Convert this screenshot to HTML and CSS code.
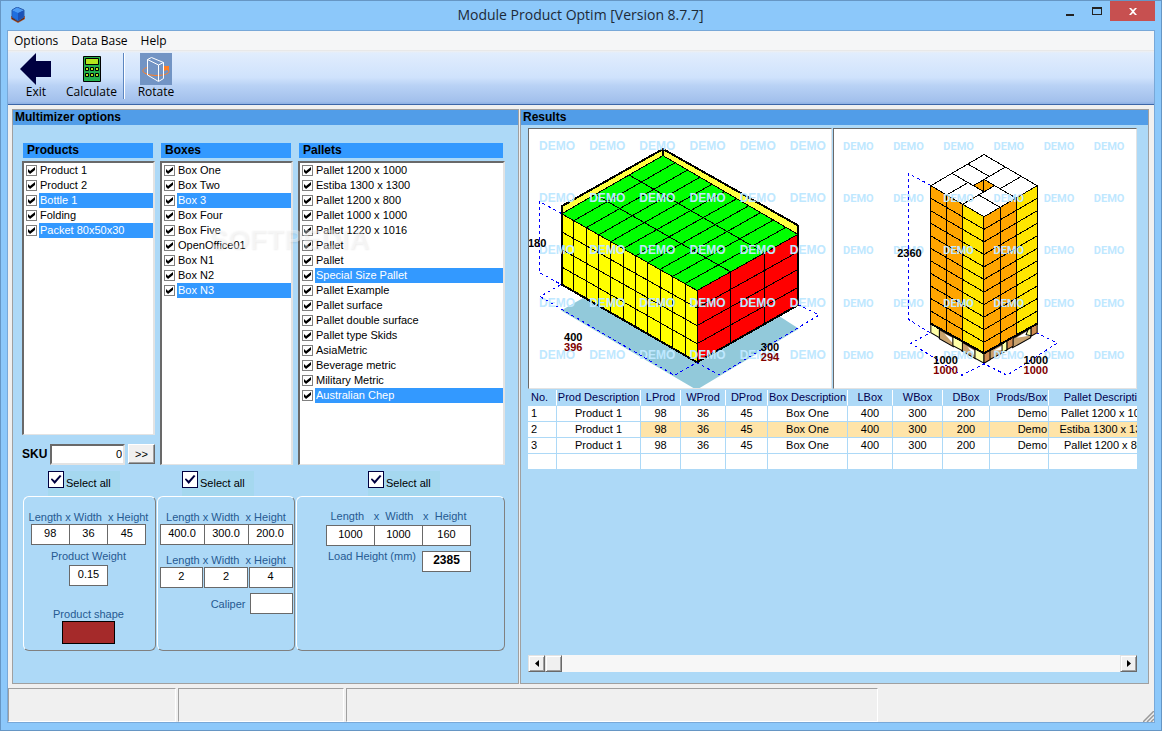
FILE: index.html
```html
<!DOCTYPE html>
<html lang="en">
<head>
<meta charset="utf-8">
<title>Module Product Optim [Version 8.7.7]</title>
<link rel="stylesheet" href="styles.css">
</head>
<body>
<div class="window">
  <header class="titlebar">
    <svg class="app-icon" viewBox="0 0 16 16" aria-hidden="true">
      <path d="M1 9v3l7 4 7-4V9z" fill="#b0552c"/>
      <path d="M2 10l6 4 6-4v2l-6 3-6-3z" fill="#5b2a18"/>
      <path d="M2 3l6 2v9l-6-4z" fill="#1f6fe0"/>
      <path d="M14 3L8 5v9l6-4z" fill="#1a52b8"/>
      <path d="M2 3l5-3 7 3-6 3z" fill="#4b9bf5"/>
      <path d="M2 3l5-3 7 3v7l-6 4-6-4z" fill="none" stroke="#2a5cae"/>
    </svg>
    <h1 class="title">Module Product Optim [Version 8.7.7]</h1>
    <div class="window-buttons">
      <button class="win-btn" aria-label="Minimize"><svg width="8" height="10"><path d="M0 8h8v2H0z" fill="#222"/></svg></button>
      <button class="win-btn" aria-label="Maximize"><svg width="10" height="8"><path d="M0 0h10v8H0zM1 2v5h8V2z" fill="#222" fill-rule="evenodd"/></svg></button>
      <button class="win-btn close" aria-label="Close"><svg width="8" height="7"><path d="M0 0h2l2 2 2-2h2L5 3.500l3 3.500H6L4 5 2 7H0l3-3.500z" fill="#fff"/></svg></button>
    </div>
  </header>

  <div class="client">
    <nav class="menubar">
      <button class="menu">Options</button>
      <button class="menu">Data Base</button>
      <button class="menu">Help</button>
    </nav>

    <div class="toolbar">
      <button class="tool tool-exit">
        <svg width="32" height="32" viewBox="0 0 32 32"><path d="M0 16L16 0v8h15v16H16v8z" fill="#000040"/></svg>
        Exit
      </button>
      <button class="tool tool-calc">
        <svg width="32" height="32" viewBox="0 0 32 32">
          <path d="M7.500 3.500h17v25h-17z" fill="#22b14c" stroke="#000"/>
          <path d="M9.500 5.500h13v6h-13z" fill="#b5e61d" stroke="#000"/>
          <path d="M9.500 14.500h3v3h-3zM14.500 14.500h3v3h-3zM19.500 14.500h3v3h-3zM9.500 20.500h3v3h-3zM14.500 20.500h3v3h-3zM19.500 20.500h3v3h-3z" fill="#b5e61d" stroke="#000"/>
        </svg>
        Calculate
      </button>
      <span class="tool-separator"></span>
      <button class="tool tool-rotate">
        <svg width="32" height="32" viewBox="0 0 32 32">
          <path d="M0 0h32v32H0z" fill="#7294c4"/>
          <path d="M8 14.500C4 15 2.500 17 3 18.500c2 4.500 20 5.500 25 1.500 2-2 1-4-4-5" fill="none" stroke="#ff7f27"/>
          <path d="M24 13h5v5l-2-1-3 1z" fill="#ff7f27"/>
          <path d="M7.500 6.500l4-2 12 5v16l-5 3-11-6.500zM7.500 6.500L18.500 12v16M18.500 12l5-2.500" fill="none" stroke="#fff"/>
        </svg>
        Rotate
      </button>
    </div>

    <main class="workspace">
      <section class="panel options">
        <h2 class="panel-title">Multimizer options</h2>
        <div class="columns">
          <div class="column">
            <h3 class="list-title">Products</h3>
            <div class="list">
              <label class="item"><input type="checkbox" checked><span>Product 1</span></label>
              <label class="item"><input type="checkbox" checked><span>Product 2</span></label>
              <label class="item selected"><input type="checkbox" checked><span>Bottle 1</span></label>
              <label class="item"><input type="checkbox" checked><span>Folding</span></label>
              <label class="item selected"><input type="checkbox" checked><span>Packet 80x50x30</span></label>
            </div>
            <div class="sku">
              <label for="sku">SKU</label>
              <input id="sku" type="text" value="0">
              <button>&gt;&gt;</button>
            </div>
          </div>
          <div class="column">
            <h3 class="list-title">Boxes</h3>
            <div class="list">
              <label class="item"><input type="checkbox" checked><span>Box One</span></label>
              <label class="item"><input type="checkbox" checked><span>Box Two</span></label>
              <label class="item selected"><input type="checkbox" checked><span>Box 3</span></label>
              <label class="item"><input type="checkbox" checked><span>Box Four</span></label>
              <label class="item"><input type="checkbox" checked><span>Box Five</span></label>
              <label class="item"><input type="checkbox" checked><span>OpenOffice01</span></label>
              <label class="item"><input type="checkbox" checked><span>Box N1</span></label>
              <label class="item"><input type="checkbox" checked><span>Box N2</span></label>
              <label class="item selected"><input type="checkbox" checked><span>Box N3</span></label>
            </div>
          </div>
          <div class="column">
            <h3 class="list-title">Pallets</h3>
            <div class="list">
              <label class="item"><input type="checkbox" checked><span>Pallet 1200 x 1000</span></label>
              <label class="item"><input type="checkbox" checked><span>Estiba 1300 x 1300</span></label>
              <label class="item"><input type="checkbox" checked><span>Pallet 1200 x 800</span></label>
              <label class="item"><input type="checkbox" checked><span>Pallet 1000 x 1000</span></label>
              <label class="item"><input type="checkbox" checked><span>Pallet 1220 x 1016</span></label>
              <label class="item"><input type="checkbox" checked><span>Pallet</span></label>
              <label class="item"><input type="checkbox" checked><span>Pallet</span></label>
              <label class="item selected"><input type="checkbox" checked><span>Special Size Pallet</span></label>
              <label class="item"><input type="checkbox" checked><span>Pallet Example</span></label>
              <label class="item"><input type="checkbox" checked><span>Pallet surface</span></label>
              <label class="item"><input type="checkbox" checked><span>Pallet double surface</span></label>
              <label class="item"><input type="checkbox" checked><span>Pallet type Skids</span></label>
              <label class="item"><input type="checkbox" checked><span>AsiaMetric</span></label>
              <label class="item"><input type="checkbox" checked><span>Beverage metric</span></label>
              <label class="item"><input type="checkbox" checked><span>Military Metric</span></label>
              <label class="item selected"><input type="checkbox" checked><span>Australian Chep</span></label>
            </div>
          </div>
        </div>

        <div class="groups">
          <div class="group-column product">
            <label class="select-all"><input type="checkbox" checked>Select all</label>
            <div class="group">
              <span class="caption">Length x Width&nbsp; x Height</span>
              <div class="fields">
                <input type="text" aria-label="Product length" value="98">
                <input type="text" aria-label="Product width" value="36">
                <input type="text" aria-label="Product height" value="45">
              </div>
              <label class="caption stacked" for="weight">Product Weight</label>
              <input class="weight" id="weight" type="text" value="0.15">
              <span class="caption shape-caption">Product shape</span>
              <button class="shape" aria-label="Product shape"></button>
            </div>
          </div>
          <div class="group-column box">
            <label class="select-all"><input type="checkbox" checked>Select all</label>
            <div class="group">
              <span class="caption">Length x Width&nbsp; x Height</span>
              <div class="fields">
                <input type="text" aria-label="Box length" value="400.0">
                <input type="text" aria-label="Box width" value="300.0">
                <input type="text" aria-label="Box height" value="200.0">
              </div>
              <span class="caption second-caption">Length x Width&nbsp; x Height</span>
              <div class="fields spaced">
                <input type="text" aria-label="Count along length" value="2">
                <input type="text" aria-label="Count along width" value="2">
                <input type="text" aria-label="Count along height" value="4">
              </div>
              <div class="inline-field">
                <label class="caption" for="caliper">Caliper</label>
                <input id="caliper" type="text" value="">
              </div>
            </div>
          </div>
          <div class="group-column pallet">
            <label class="select-all"><input type="checkbox" checked>Select all</label>
            <div class="group">
              <div class="caption spread"><span>Length</span><span>x&nbsp; Width</span><span>x&nbsp; Height</span></div>
              <div class="fields">
                <input type="text" aria-label="Pallet length" value="1000">
                <input type="text" aria-label="Pallet width" value="1000">
                <input type="text" aria-label="Pallet height" value="160">
              </div>
              <div class="inline-field">
                <label class="caption" for="load">Load Height (mm)</label>
                <input class="strong" id="load" type="text" value="2385">
              </div>
            </div>
          </div>
        </div>
        <div class="watermark">SOFTPEDIA</div>
      </section>

      <section class="panel results">
        <h2 class="panel-title">Results</h2>
        <div class="results-body">
          <div class="views">
            <svg class="view" viewBox="530 129 301 258" role="img" aria-label="Box loading">
              <path d="M562 310L597 290H740L799 328 697 389z" fill="#92c9da"/>
              <path d="M562.500 206L663.500 149 798 225V235L663.500 156 562.500 214z" fill="#ffff40"/>
              <path d="M562.500 213.500L663.500 155.500 798 234 697.500 290z" fill="#0f0"/>
              <path d="M562.500 213.500L697.500 290V361.500L562.500 284z" fill="#ff0"/>
              <path d="M697.500 290L798 234V304.500L697.500 361.500z" fill="#f00"/>
              <g class="grid">
                <path d="M562.500 213.500L663.500 155.500 798 234 697.500 290zM596 194.300l134.800 77M630 175l134.500 77.500"/>
                <path d="M574.500 220.500l101.300-58M587 227.400l101-57.500M599.500 234.500l101-57.500M611.500 241.300l101.300-57.500M624 248.200l101-57M636.500 255.200l101-57M648.500 262.200l101-57M660.500 269l101-57M673 276l101-56.500M685.500 283l100.500-56"/>
                <path d="M574.500 220.500v71M587.500 227.500v71M599.500 234.500v71M611.500 241.500v71M624.500 248.500v71M636.500 255.500v71M648.500 262.500v71M661.500 269v71M673.500 276v71M685.500 283v71M697.500 290v71"/>
                <path d="M562.500 231.500L697.500 307.500 798 251.500M562.500 249L697.500 325 798 269M562.500 266.500L697.500 343 798 287M730.500 271.500v71M764.500 253v71"/>
              </g>
              <path class="shell" d="M562.500 284V206L663.500 149 798 225V304.500L697.500 361.500 562.500 284M663.500 149v7"/>
              <g class="demo">
                <g id="demo-row"><text x="540" y="150">DEMO</text><text x="590" y="150">DEMO</text><text x="640" y="150">DEMO</text><text x="690" y="150">DEMO</text><text x="740" y="150">DEMO</text><text x="790" y="150">DEMO</text></g>
                <use href="#demo-row" y="52"/><use href="#demo-row" y="104"/><use href="#demo-row" y="156"/><use href="#demo-row" y="208"/>
              </g>
              <path class="dim" d="M562 213L540.500 201.500V272L562 284 541 296 675 374.500 697 362 720 374 819 314.500 798 304"/>
              <g class="num"><text x="529" y="247">180</text><text x="565" y="340">400</text><text class="net" x="565" y="350">396</text><text x="761" y="350">300</text><text class="net" x="761" y="360">294</text></g>
            </svg>
            <svg class="view" viewBox="835 129 301 258" role="img" aria-label="Pallet loading">
              <path d="M931.500 323v9l53 30.500 53-30.500v-9l-53 29.500z" fill="#fff"/>
              <path d="M940 329l14 8v9l-14-8zM962 341l14 8v9l-14-8zM1007 341l-17 9v9l17-9zM1031 328l-18 10v9l18-10z" fill="#c8a26e" stroke="#000"/>
              <path d="M1017 337l13-8v6zM994 350l12-7v6zM945 333l8 4v5zM968 346l7 4v5z" fill="#fff"/>
              <g class="block">
                <path d="M931.500 323v9l8.500 5v-9zM953.500 336v9l9.500 5v-9zM975.500 348v9.500l9 5V353zM1007.500 340v9l-5 3v-9zM1031.500 327v8l-5-1 2-5z" fill="#ffffa8"/>
                <path d="M984.500 353v9.500l6-3.500v-9.500zM1007.500 340v9l6-3.500v-9zM1031.500 326.500v9l6-3.500v-9z" fill="#d08c50"/>
              </g>
              <path d="M931.500 185.500L984.500 154.500 1037.500 185.500 984.500 216.500z" fill="#fff"/>
              <path d="M931.500 185.500L963.500 204V341L931.500 323zM984.500 216.500L1016.500 198V335L984.500 353zM974 185.500l10.500-6 10.500 6-10.500 6z" fill="#ffa500"/>
              <path d="M963.500 204L984.500 216.500V353L963.500 341zM1016.500 198L1037.500 185.500V323L1016.500 335z" fill="#ffe600"/>
              <g class="grid">
                <path d="M931.500 185.500L984.500 154.500 1037.500 185.500 984.500 216.500zM952.700 173.200L984.500 191.600M947.400 194.700L968.600 182.400M963.300 204L995.100 185.500M979.200 194.700L1000.400 207M984.500 179.300L1016.300 197.800M1000.400 188.600L1021.600 176.300M973.900 185.500L1005.700 167M968.600 164L989.800 176.300M984.500 179v12"/>
                <path d="M931.500 185.500V323M947.500 195v137M963.500 204v137M984.500 216.500V353M1000.500 207v137M1016.500 198v137M1037.500 185.500V323"/>
                <path id="layer" d="M931.500 198L984.500 229 1037.500 198"/>
                <use href="#layer" y="12.500"/><use href="#layer" y="25"/><use href="#layer" y="37.500"/><use href="#layer" y="50"/><use href="#layer" y="62.500"/><use href="#layer" y="75"/><use href="#layer" y="87.500"/><use href="#layer" y="100"/><use href="#layer" y="112.500"/>
              </g>
              <path class="shell" d="M931.500 323L984.500 352.500 1037.500 323"/>
              <g class="demo small">
                <g id="demo-row-2"><text x="844" y="150">DEMO</text><text x="894" y="150">DEMO</text><text x="944" y="150">DEMO</text><text x="994" y="150">DEMO</text><text x="1044" y="150">DEMO</text><text x="1094" y="150">DEMO</text></g>
                <use href="#demo-row-2" y="52"/><use href="#demo-row-2" y="104"/><use href="#demo-row-2" y="156"/><use href="#demo-row-2" y="208"/>
              </g>
              <path class="dim" d="M931 185L909.500 173.500V319L931 332 911.500 342.500 962.500 374.500 984.500 363 1007.500 374.500 1057.500 342.500 1037 332"/>
              <g class="num"><text x="898" y="257">2360</text><text x="934" y="363">1000</text><text class="net" x="934" y="373">1000</text><text x="1024" y="363">1000</text><text class="net" x="1024" y="373">1000</text></g>
            </svg>
          </div>

          <div class="table-wrap">
            <table>
              <colgroup><col class="w-no"><col class="w-prod"><col class="w-l"><col class="w-w"><col class="w-d"><col class="w-box"><col class="w-w"><col class="w-wb"><col class="w-db"><col class="w-pb"><col class="w-pal"></colgroup>
              <thead>
                <tr><th class="left">No.</th><th>Prod Description</th><th>LProd</th><th>WProd</th><th>DProd</th><th>Box Description</th><th>LBox</th><th>WBox</th><th>DBox</th><th class="right">Prods/Box</th><th>Pallet Description</th></tr>
              </thead>
              <tbody>
                <tr><td class="left">1</td><td>Product 1</td><td>98</td><td>36</td><td>45</td><td>Box One</td><td>400</td><td>300</td><td>200</td><td class="right">Demo</td><td>Pallet 1200 x 1000</td></tr>
                <tr class="current"><td class="left">2</td><td>Product 1</td><td>98</td><td>36</td><td>45</td><td>Box One</td><td>400</td><td>300</td><td>200</td><td class="right">Demo</td><td>Estiba 1300 x 1300</td></tr>
                <tr><td class="left">3</td><td>Product 1</td><td>98</td><td>36</td><td>45</td><td>Box One</td><td>400</td><td>300</td><td>200</td><td class="right">Demo</td><td>Pallet 1200 x 800</td></tr>
                <tr><td></td><td></td><td></td><td></td><td></td><td></td><td></td><td></td><td></td><td></td><td></td></tr>
              </tbody>
            </table>
          </div>

          <div class="scrollbar">
            <button aria-label="Scroll left"><svg width="4" height="7"><path d="M4 0v7L0 3.500z"/></svg></button>
            <span class="thumb"></span>
            <span class="track"></span>
            <button aria-label="Scroll right"><svg width="4" height="7"><path d="M0 0v7l4-3.500z"/></svg></button>
          </div>
        </div>
      </section>
    </main>

    <footer class="statusbar">
      <span class="status-cell first"></span>
      <span class="status-cell second"></span>
      <span class="status-cell third"></span>
      <svg class="grip" width="11" height="11"><path d="M0 11L11 0M4 11l7-7M8 11l3-3" stroke="#999" stroke-width="1.500"/></svg>
    </footer>
  </div>
</div>
</body>
</html>
```
FILE: styles.css
```css
* { box-sizing: border-box; }

body {
  margin: 0;
  font: 11px/15px "Liberation Sans", Arial, sans-serif;
  color: #000;
}

h1, h2, h3 { margin: 0; }

button, input { font: inherit; color: inherit; margin: 0; }

.window {
  display: flex;
  flex-direction: column;
  min-height: 100vh;
  padding: 0 7px 7px;
  background: #8cc8fa;
  border: 1px solid #6696c4;
}

/* Title bar */
.titlebar {
  display: grid;
  grid-template-columns: 1fr auto 1fr;
  height: 29px;
  margin-right: -1px;
}
.app-icon { width: 16px; height: 16px; margin: 6px 0 0 2px; }
.title {
  padding-right: 2px;
  font: 14px/28px "Open Sans", "Segoe UI", sans-serif;
  color: #1c2a38;
}
.window-buttons { display: flex; justify-content: flex-end; align-items: flex-start; }
.win-btn {
  display: grid;
  place-items: center;
  width: 27px;
  height: 20px;
  padding: 0;
  border: 0;
  background: none;
}
.win-btn.close { width: 45px; background: #c75050; }

.client {
  flex: 1;
  display: flex;
  flex-direction: column;
  margin: 0 -1px;
  border: 1px solid #78a8d8;
  background: #f0f0f0;
}

/* Menu and toolbar */
.menubar {
  display: flex;
  gap: 13px;
  height: 20px;
  padding-left: 6px;
  background: #f5f6f7;
  border-bottom: 1px solid #e8e8e8;
}
.menu {
  padding: 0;
  border: 0;
  background: none;
  font: 12px/20px "Open Sans", "Segoe UI", sans-serif;
}
.toolbar {
  display: flex;
  height: 54px;
  padding: 2px 4px 0;
  background: linear-gradient(#f0f0f0 0, #e1edfd 2px, #cfe2fc 50%, #b9d2f5 65%, #a2c0ec 95%, #8db0e4);
  border-bottom: 1px solid #3c66a8;
}
.tool {
  display: flex;
  flex-direction: column;
  align-items: center;
  padding: 0;
  border: 0;
  background: none;
  font: 12px/14px "Open Sans", "Segoe UI", sans-serif;
}
.tool-exit { width: 48px; }
.tool-calc { width: 63px; }
.tool-rotate { width: 62px; }
.tool-separator {
  width: 2px;
  height: 46px;
  background: #fff;
  border-left: 1px solid #5c86c0;
}

/* Panels */
.workspace {
  flex: 1;
  display: flex;
  gap: 1px;
  padding: 4px 5px 4px 4px;
}
.panel {
  position: relative;
  background: #add9f7;
  border: 1px solid #a0a0a0;
}
.panel-title {
  height: 15px;
  padding-left: 2px;
  background: #519de8;
  font-size: 12px;
  line-height: 14px;
}
.options { flex: none; width: 507px; }
.results { flex: 1; min-width: 0; display: flex; flex-direction: column; }

.columns {
  display: grid;
  grid-template-columns: 133px 133px 207px;
  column-gap: 5px;
  height: 322px;
  margin: 18px 0 0 9px;
}
.column { display: flex; flex-direction: column; }
.list-title {
  height: 15px;
  margin: 0 2px 3px 1px;
  padding-left: 4px;
  background: #39f;
  font-size: 12px;
  line-height: 14px;
}
.list {
  flex: 1;
  padding: 0;
  background: #fff;
  border: 2px solid #696969;
  border-width: 2px 2px 1px 2px;
  border-right-color: #e3e3e3;
  border-bottom-color: #e3e3e3;
}
.item { display: flex; align-items: center; height: 15px; }
.item span { flex: 1; height: 15px; padding-left: 1px; margin-left: 2px; }
.item.selected span { background: #39f; color: #fff; }
.item input {
  appearance: none;
  display: grid;
  place-items: center;
  width: 11px;
  height: 11px;
  margin-left: 2px;
  border: 1px solid #808080;
  background: #fff;
}
.item input:checked::before,
.select-all input:checked::before {
  content: "";
  width: 7px;
  height: 7px;
  background: #000;
  clip-path: polygon(0 29%, 29% 57%, 100% 0, 100% 43%, 29% 100%, 0 71%);
}

.sku { display: flex; align-items: center; height: 30px; padding-top: 8px; }
.sku label { width: 28px; font-weight: bold; font-size: 12px; }
.sku input {
  width: 75px;
  height: 21px;
  padding: 0 1px;
  text-align: right;
  background: #fff;
  border: 2px solid #696969;
  border-right-color: #e3e3e3;
  border-bottom-color: #e3e3e3;
}
.sku button {
  width: 27px;
  height: 20px;
  margin-left: 3px;
  padding: 0;
  background: #f0f0f0;
  border: 1px solid #fff;
  border-right-color: #696969;
  border-bottom-color: #696969;
  box-shadow: inset -1px -1px #a0a0a0;
}

/* Parameter groups */
.groups {
  display: grid;
  grid-template-columns: 133px 138px 209px;
  column-gap: 1px;
  margin: 6px 0 0 10px;
}
.select-all {
  display: flex;
  align-items: center;
  gap: 2px;
  width: 72px;
  height: 25px;
  margin-left: 25px;
  background: #a5d8ef;
}
.pallet .select-all { margin-left: 72px; }
.select-all input {
  appearance: none;
  display: grid;
  place-items: center;
  align-self: flex-start;
  width: 16px;
  height: 17px;
  border: 1px solid #000040;
  background: #fff;
}
.select-all input:checked::before {
  width: 11px;
  height: 9px;
  background: #000040;
  clip-path: polygon(0 45%, 15% 38%, 38% 65%, 85% 0, 100% 10%, 38% 100%);
}
.group {
  display: flex;
  flex-direction: column;
  align-items: center;
  height: 155px;
  padding-top: 13px;
  border: 1px solid #fff;
  border-right-color: #808080;
  border-bottom-color: #808080;
  border-radius: 6px;
}
.caption { color: #265a92; line-height: 14px; white-space: nowrap; }
.group input {
  height: 21px;
  padding: 0 0 4px;
  text-align: center;
  background: #fff;
  border: 1px solid #696969;
}
.fields { display: flex; }
.product .fields { width: 116px; }
.box .fields { width: 133px; }
.pallet .fields { width: 145px; }
.fields input { flex: 1; min-width: 0; }
.fields input + input { margin-left: -1px; }
.fields.spaced { gap: 1px; }
.fields.spaced input + input { margin-left: 0; }
.product .group { padding-right: 2px; }
.product .stacked { margin-top: 4px; }
.weight { width: 39px; margin-top: 2px; }
.shape-caption { margin-top: 21px; }
.shape {
  width: 53px;
  height: 23px;
  background: #a52a2a;
  border: 1px solid #000;
}
.second-caption { margin-top: 8px; }
.inline-field { display: flex; justify-content: flex-end; gap: 4px; }
.box .inline-field { width: 133px; margin-top: 5px; }
.box .inline-field label { padding-top: 4px; }
.box .inline-field input { width: 43px; }
.pallet .group { padding: 12px 4px 0 0; }
.pallet .fields { margin-top: 2px; }
.pallet .inline-field { width: 145px; margin-top: 5px; gap: 6px; }
.pallet .inline-field label { line-height: 11px; }
.pallet .inline-field input { width: 49px; }
.group .strong { font-weight: bold; font-size: 12px; }
.spread { display: flex; justify-content: space-between; width: 136px; }

.watermark {
  position: absolute;
  left: 196px;
  top: 113px;
  font-size: 28px;
  line-height: 34px;
  font-weight: bold;
  color: rgba(255, 255, 255, .4);
  text-shadow: 1px 1px 2px rgba(0, 0, 0, .07);
  pointer-events: none;
}

/* Results */
.results-body {
  flex: 1;
  display: flex;
  flex-direction: column;
  padding: 3px 11px 11px 7px;
}
.views { display: grid; grid-template-columns: 1fr 1fr; gap: 1px; }
.view {
  display: block;
  width: 100%;
  background: #fff;
  border: 2px solid #696969;
  border-width: 1px;
  border-right-color: #e3e3e3;
  border-bottom-color: #e3e3e3;
}
.grid { fill: none; stroke: #000; shape-rendering: crispEdges; }
.block { stroke: #000; }
.shell { fill: none; stroke: #000; stroke-width: 2px; shape-rendering: crispEdges; }
.dim { fill: none; stroke: #00f; stroke-dasharray: 3 3; shape-rendering: crispEdges; }
.demo { fill: #bfe8ff; font-size: 12px; font-weight: bold; }
.demo.small { font-family: Roboto, sans-serif; font-size: 11px; }
.num { font-size: 11px; font-weight: bold; }
.net { fill: #800000; }

.table-wrap { margin-top: 1px; overflow: hidden; }
table { width: 637px; table-layout: fixed; border-collapse: separate; border-spacing: 0; }
th, td {
  height: 16px;
  padding: 0 2px;
  text-align: center;
  font-weight: normal;
  line-height: 15px;
  white-space: nowrap;
  border-right: 1px solid #add9f7;
  border-bottom: 1px solid #add9f7;
}
th { padding: 0; color: #000050; border-right-color: #fff; }
td { background: #fff; }
.left { text-align: left; padding-left: 3px; }
.right { text-align: right; padding-right: 1px; }
.current td:nth-child(n+3) { background: #ffe4a8; }
.w-no { width: 29px; }
.w-prod { width: 84px; }
.w-l { width: 40px; }
.w-w { width: 45px; }
.w-d { width: 42px; }
.w-box { width: 80px; }
.w-wb { width: 50px; }
.w-db { width: 47px; }
.w-pb { width: 59px; }
.w-pal { width: 116px; }

.scrollbar { display: flex; height: 17px; margin-top: auto; }
.scrollbar button, .thumb {
  display: grid;
  place-items: center;
  width: 17px;
  padding: 0;
  background: #f0f0f0;
  border: 1px solid #e3e3e3;
  border-right-color: #696969;
  border-bottom-color: #696969;
  box-shadow: inset 1px 1px #fff, inset -1px -1px #a0a0a0;
}
.track { flex: 1; background: #f7f7f7; }

/* Status bar */
.statusbar { display: flex; gap: 2px; height: 34px; }
.status-cell {
  border: 1px solid #a0a0a0;
  border-right-color: #fff;
  border-bottom-color: #fff;
}
.first { width: 168px; }
.second { width: 166px; }
.third { width: 532px; }
.grip { margin: auto 0 0 auto; }
```
